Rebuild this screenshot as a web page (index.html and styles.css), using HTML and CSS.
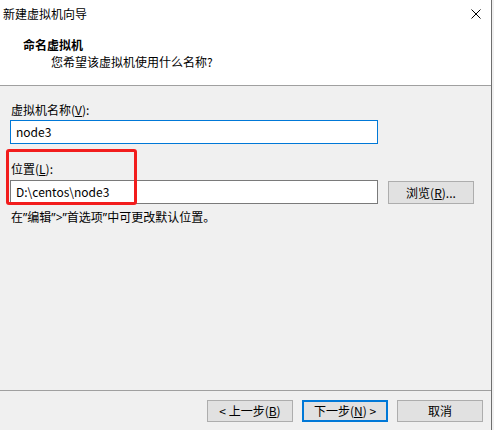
FILE: index.html
```html
<!DOCTYPE html>
<html lang="zh-CN">
<head>
<meta charset="utf-8">
<title>新建虚拟机向导</title>
<link rel="stylesheet" href="styles.css">
</head>
<body>
<div class="window">
  <div class="header">
    <div class="titlebar">
      <span class="title">新建虚拟机向导</span>
      <svg class="close" width="10" height="10" viewBox="0 0 10 10"><path d="M0.5 0.5 L9.5 9.5 M9.5 0.5 L0.5 9.5" stroke="#000" stroke-width="1" fill="none"/></svg>
    </div>
    <div class="heading">命名虚拟机</div>
    <div class="subheading">您希望该虚拟机使用什么名称?</div>
  </div>
  <div class="content">
    <div class="label first">虚拟机名称(<u>V</u>):</div>
    <div class="row">
      <div class="input focused">node3</div>
    </div>
    <div class="label second">位置(<u>L</u>):</div>
    <div class="row">
      <div class="input">D:\centos\node3</div>
      <div class="btn browse">浏览(<u>R</u>)...</div>
    </div>
    <div class="hint">在<span class="q">”</span>编辑<span class="q">”&gt;”</span>首选项<span class="q">”</span>中可更改默认位置。</div>
    <div class="annotation"></div>
  </div>
  <div class="footer">
    <div class="btn">&lt; 上一步(<u>B</u>)</div>
    <div class="btn default">下一步(<u>N</u>) &gt;</div>
    <div class="btn">取消</div>
  </div>
</div>
</body>
</html>
```
FILE: styles.css
```css
html, body {
  margin: 0;
  padding: 0;
  background: #f0f0f0;
}
body {
  font-family: "Noto Sans CJK SC", "Noto Sans", sans-serif;
  font-size: 12px;
  line-height: 16px;
  color: #000;
}
.window {
  width: 492px;
  height: 430px;
  box-sizing: border-box;
  border-right: 1px solid #6e6e6e;
  background: #f0f0f0;
  display: flex;
  flex-direction: column;
}
.header {
  background: #fff;
  height: 86px;
  box-sizing: border-box;
  border-bottom: 1px solid #a0a0a0;
  padding-top: 6px;
}
.titlebar {
  display: flex;
  justify-content: space-between;
  align-items: flex-start;
  padding-left: 3px;
  padding-right: 10px;
  height: 16px;
}
.close {
  margin-top: 3px;
  display: block;
}
.heading {
  margin-top: 15px;
  padding-left: 23px;
  font-weight: bold;
}
.subheading {
  margin-top: 1px;
  padding-left: 51px;
}
.content {
  flex: 1;
  position: relative;
  padding: 16px 0 0 10px;
}
.label {
  padding-left: 1px;
}
.label.first {
  margin-bottom: 2px;
}
.label.second {
  margin-top: 17px;
  margin-bottom: 3px;
}
.row {
  display: flex;
  align-items: flex-start;
  gap: 10px;
}
.input {
  width: 368px;
  height: 24px;
  box-sizing: border-box;
  border: 1px solid #7a7a7a;
  background: #fff;
  padding-left: 5px;
  line-height: 22px;
  font-size: 12px;
}
.input.focused {
  border-color: #0078d7;
}
.btn {
  width: 86px;
  height: 22px;
  box-sizing: border-box;
  border: 1px solid #adadad;
  background: #e1e1e1;
  text-align: center;
  line-height: 20px;
}
.btn.browse {
  height: 23px;
  margin-top: 1px;
  line-height: 21px;
}
.btn.default {
  border: 2px solid #0078d7;
  line-height: 18px;
}
.hint {
  margin-top: 5px;
  padding-left: 1px;
}
.q {
  font-family: "Noto Sans", "Liberation Sans", sans-serif;
}
.annotation {
  position: absolute;
  left: 6px;
  top: 63px;
  width: 131px;
  height: 56px;
  box-sizing: border-box;
  border: 3px solid #f21d1d;
  border-radius: 3px;
}
.footer {
  height: 40px;
  box-sizing: border-box;
  border-top: 1px solid #a0a0a0;
  display: flex;
  justify-content: flex-end;
  gap: 9px;
  padding: 9px 8px 0 0;
}
```
